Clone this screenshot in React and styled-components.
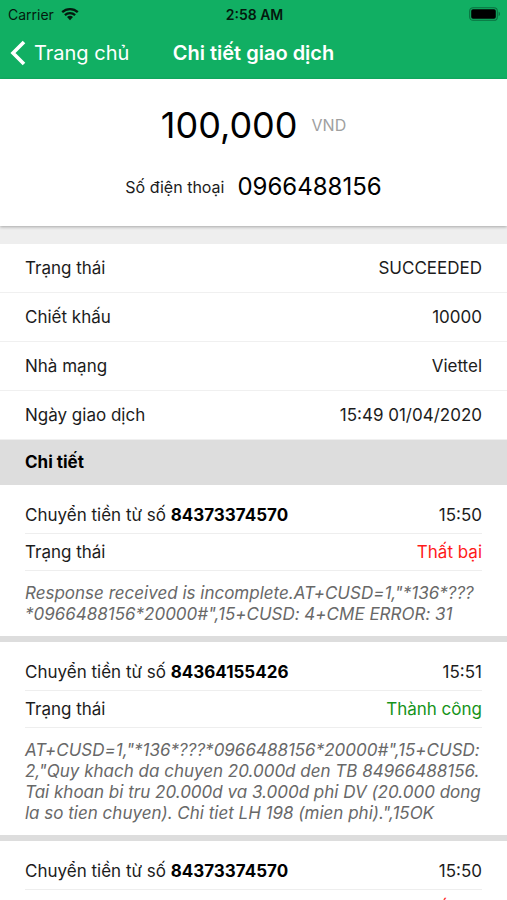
import styled, { createGlobalStyle } from "styled-components";

const details = [
    { label: "Trạng thái", value: "SUCCEEDED" },
    { label: "Chiết khấu", value: "10000" },
    { label: "Nhà mạng", value: "Viettel" },
    { label: "Ngày giao dịch", value: "15:49 01/04/2020" },
];

const transfers = [
    {
        phone: "84373374570",
        time: "15:50",
        success: false,
        message: `Response received is incomplete.AT+CUSD=1,"*136*???
*0966488156*20000#",15+CUSD: 4+CME ERROR: 31`,
    },
    {
        phone: "84364155426",
        time: "15:51",
        success: true,
        message: `AT+CUSD=1,"*136*???*0966488156*20000#",15+CUSD:
2,"Quy khach da chuyen 20.000d den TB 84966488156.
Tai khoan bi tru 20.000d va 3.000d phi DV (20.000 dong
la so tien chuyen). Chi tiet LH 198 (mien phi).",15OK`,
    },
    {
        phone: "84373374570",
        time: "15:50",
        success: false,
    },
];

function Transfer({ phone, time, success, message }) {
    return (
        <TransferBox>
            <TransferRow>
                <span>Chuyển tiền từ số <strong>{phone}</strong></span>
                <time>{time}</time>
            </TransferRow>
            <TransferRow>
                <span>Trạng thái</span>
                <Status $success={success}>{success ? "Thành công" : "Thất bại"}</Status>
            </TransferRow>
            {message && <Message>{message}</Message>}
        </TransferBox>
    );
}

function App() {
    return (
        <Page>
            <GlobalStyle />
            <Header>
                <StatusBar>
                    <Carrier>
                        Carrier
                        <svg width="18" height="14" viewBox="0 0 18 14" aria-hidden="true">
                            <path d="M1.2 5.2a11.3 11.3 0 0 1 15.6 0" fill="none" stroke="#04190e" strokeWidth="2.3" />
                            <path d="M3.9 8.1a7.4 7.4 0 0 1 10.2 0" fill="none" stroke="#04190e" strokeWidth="2.2" />
                            <path d="M6 10.1a4.4 4.4 0 0 1 6 0l-3 3.1z" fill="#04190e" />
                        </svg>
                    </Carrier>
                    <Clock>2:58 AM</Clock>
                    <Battery>
                        <svg width="32" height="14" viewBox="0 0 32 14" aria-hidden="true">
                            <rect x="0.7" y="0.7" width="27.6" height="12.6" rx="3.4" fill="none" stroke="#0a6f3f" strokeWidth="1.1" />
                            <rect x="2.2" y="2.2" width="24.6" height="9.6" rx="1.8" fill="#000" />
                            <path d="M29.6 4.8c1.8.6 1.8 3.8 0 4.4z" fill="#0a6f3f" />
                        </svg>
                    </Battery>
                </StatusBar>
                <NavBar>
                    <BackLink href="#">
                        <svg width="16" height="26" viewBox="0 0 16 26" aria-hidden="true">
                            <path d="M14 2L3 13l11 11" fill="none" stroke="#fff" strokeWidth="3.6" />
                        </svg>
                        Trang chủ
                    </BackLink>
                    <Title>Chi tiết giao dịch</Title>
                </NavBar>
            </Header>
            <Summary>
                <Amount>100,000 <small>VND</small></Amount>
                <Phone>Số điện thoại <span>0966488156</span></Phone>
            </Summary>
            <Details>
                {details.map(({ label, value }) => (
                    <DetailRow key={label}>
                        <dt>{label}</dt>
                        <dd>{value}</dd>
                    </DetailRow>
                ))}
            </Details>
            <SectionTitle>Chi tiết</SectionTitle>
            {transfers.map((transfer, index) => (
                <Transfer key={index} {...transfer} />
            ))}
        </Page>
    );
}

const GlobalStyle = createGlobalStyle`
    * {
        box-sizing: border-box;
    }

    html {
        scrollbar-width: none;
    }

    body {
        margin: 0;
        background: #eeeeee;
        color: #1c1c1c;
        font-family: Inter, "Liberation Sans", sans-serif;
        font-size: 17px;
        line-height: 21px;
    }
`;

const Page = styled.main`
    min-height: 100vh;
`;

const Header = styled.header`
    height: 79px;
    background: #11af63;
`;

const StatusBar = styled.div`
    display: grid;
    grid-template-columns: 1fr auto 1fr;
    align-items: center;

    height: 28px;
    padding: 0 6px 0 8px;

    font-size: 14px;
    color: #04190e;
`;

const Carrier = styled.span`
    display: flex;
    align-items: center;
    gap: 7px;
`;

const Clock = styled.time`
    font-weight: 600;
`;

const Battery = styled.span`
    display: flex;
    justify-content: flex-end;
`;

const NavBar = styled.nav`
    display: grid;
    grid-template-columns: 1fr auto 1fr;
    align-items: center;

    height: 50px;
    padding: 0 10px;
`;

const BackLink = styled.a`
    display: flex;
    align-items: center;
    gap: 8px;

    font-size: 20px;
    color: #ffffff;
    text-decoration: none;
    white-space: nowrap;
`;

const Title = styled.h1`
    margin: 0;

    font-weight: 600;
    font-size: 20px;
    color: #ffffff;
`;

const Summary = styled.section`
    display: flex;
    flex-direction: column;
    align-items: center;
    gap: 22px;

    position: relative;
    padding: 24px 26px 22px;
    margin-bottom: 18px;

    background: #ffffff;
    box-shadow: 0 1px 3px rgba(0, 0, 0, 0.3);
`;

const Amount = styled.div`
    display: flex;
    align-items: center;
    gap: 14px;

    font-size: 36px;
    line-height: 45px;
    color: #000000;

    small {
        font-size: 16px;
        color: #a0a0a0;
    }
`;

const Phone = styled.div`
    display: flex;
    align-items: center;
    gap: 13px;

    font-size: 16px;
    line-height: 34px;

    span {
        font-size: 24px;
        color: #000000;
    }
`;

const Details = styled.dl`
    margin: 0;
    background: #ffffff;
`;

const DetailRow = styled.div`
    display: flex;
    justify-content: space-between;
    align-items: center;

    height: 49px;
    padding: 0 25px;
    border-bottom: 1px solid #f0f0f0;

    dd {
        margin: 0;
    }
`;

const SectionTitle = styled.h2`
    margin: 0;
    padding: 12px 25px;

    background: #dddddd;
    font-weight: 700;
    font-size: 17px;
    color: #000000;
`;

const TransferBox = styled.article`
    padding: 12px 25px 11px;
    background: #ffffff;
    border-bottom: 6px solid #dddddd;
`;

const TransferRow = styled.div`
    display: flex;
    justify-content: space-between;
    align-items: center;

    height: 37px;
    border-bottom: 1px solid #eeeeee;

    strong {
        font-weight: 700;
        color: #000000;
    }
`;

const Status = styled.span`
    color: ${({ $success }) => ($success ? "#15931a" : "#ff1a1a")};
`;

/* contextual alternates would turn the * of a dial code into a multiplication sign */
const Message = styled.p`
    margin: 12px 0 0;

    font-style: italic;
    font-variant-ligatures: no-contextual;
    white-space: pre;
    color: #686868;
`;

export default App;
